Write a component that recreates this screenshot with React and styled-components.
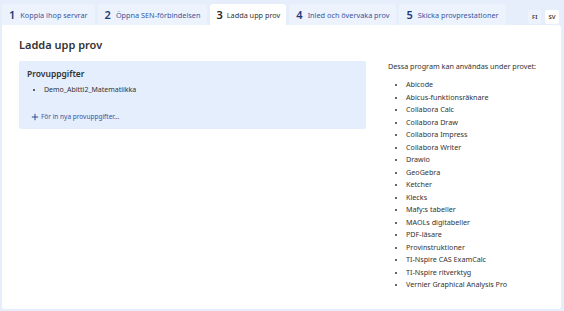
import styled, { createGlobalStyle } from "styled-components";

const GlobalStyle = createGlobalStyle`
  html, body {
    margin: 0;
    padding: 0;
    background: #e6eefb;
    font-family: "Noto Sans", "Open Sans", sans-serif;
    color: #333;
  }
`;

const steps = [
  "Koppla ihop servrar",
  "Öppna SEN-förbindelsen",
  "Ladda upp prov",
  "Inled och övervaka prov",
  "Skicka provprestationer",
];

const programs = [
  "Abicode",
  "Abicus-funktionsräknare",
  "Collabora Calc",
  "Collabora Draw",
  "Collabora Impress",
  "Collabora Writer",
  "Drawio",
  "GeoGebra",
  "Ketcher",
  "Klecks",
  "Mafy:s tabeller",
  "MAOLs digitabeller",
  "PDF-läsare",
  "Provinstruktioner",
  "TI-Nspire CAS ExamCalc",
  "TI-Nspire ritverktyg",
  "Vernier Graphical Analysis Pro",
];

export default function App() {
  const active = 2;
  return (
    <Page>
      <GlobalStyle />
      <TabBar>
        {steps.map((s, i) => (
          <Tab key={s} $active={i === active}>
            <Num $active={i === active}>{i + 1}</Num>
            {s}
          </Tab>
        ))}
        <Lang>
          <LangBtn>FI</LangBtn>
          <LangBtn $active>SV</LangBtn>
        </Lang>
      </TabBar>
      <Panel>
        <Main>
          <Title>Ladda upp prov</Title>
          <Box>
            <BoxTitle>Provuppgifter</BoxTitle>
            <FileList>
              <li>Demo_Abitti2_Matematiikka</li>
            </FileList>
            <AddLink>
              <Plus viewBox="0 0 10 10">
                <path d="M5 1v8M1 5h8" stroke="#1f3a7a" strokeWidth="1.1" />
              </Plus>
              För in nya provuppgifter...
            </AddLink>
          </Box>
        </Main>
        <Side>
          <SideIntro>Dessa program kan användas under provet:</SideIntro>
          <ProgramList>
            {programs.map((p) => (
              <li key={p}>{p}</li>
            ))}
          </ProgramList>
        </Side>
      </Panel>
    </Page>
  );
}

const Page = styled.div`
  height: 311px;
  box-sizing: border-box;
  padding: 4px 3px 2px 2px;
  display: flex;
  flex-direction: column;
`;

const TabBar = styled.div`
  display: flex;
  align-items: flex-end;
  gap: 3px;
  height: 21px;
`;

const Tab = styled.div`
  display: flex;
  align-items: center;
  gap: ${(p) => (p.$active ? "4px" : "5px")};
  height: 21px;
  padding: 0 ${(p) => (p.$active ? "6px" : "7px")};
  box-sizing: border-box;
  border-radius: 3px 3px 0 0;
  background: ${(p) => (p.$active ? "#fff" : "#edf3fd")};
  color: ${(p) => (p.$active ? "#333" : "#3a55a0")};
  font-size: 7.3px;
  white-space: nowrap;
`;

const Num = styled.span`
  font-size: 11px;
  font-weight: 600;
  color: ${(p) => (p.$active ? "#222" : "#1f3a7a")};
`;

const Lang = styled.div`
  margin-left: auto;
  display: flex;
  gap: 4px;
  align-self: center;
  margin-top: 4px;
  margin-right: 2px;
`;

const LangBtn = styled.div`
  font-size: 6px;
  font-weight: 600;
  color: #333;
  padding: 3px 3.5px;
  border-radius: 2px;
  background: ${(p) => (p.$active ? "#fff" : "#edf3fd")};
`;

const Panel = styled.div`
  flex: 1;
  background: #fff;
  border-radius: 0 3px 3px 3px;
  display: flex;
  gap: 22px;
  padding: 12px 17px;
`;

const Main = styled.div`
  width: 347px;
`;

const Title = styled.h1`
  margin: 0 0 9px;
  font-size: 11px;
  font-weight: 600;
  color: #333;
`;

const Box = styled.div`
  background: #e5eefd;
  border-radius: 2px;
  padding: 7px 8px 8px;
`;

const BoxTitle = styled.div`
  font-size: 8.5px;
  font-weight: 600;
  color: #333;
`;

const FileList = styled.ul`
  margin: 6px 0 18px;
  padding-left: 17px;
  font-size: 7px;
  color: #333;
  li::marker {
    font-size: 6px;
  }
`;

const AddLink = styled.div`
  display: flex;
  align-items: center;
  gap: 2px;
  padding-left: 4px;
  font-size: 6.5px;
  color: #3a55a0;
`;

const Plus = styled.svg`
  width: 8px;
  height: 8px;
`;

const Side = styled.div`
  flex: 1;
  padding-top: 24px;
`;

const SideIntro = styled.div`
  font-size: 7.2px;
  color: #333;
`;

const ProgramList = styled.ul`
  margin: 7px 0 0;
  padding-left: 18px;
  font-size: 7.2px;
  line-height: 12.5px;
  color: #333;
  li::marker {
    font-size: 6px;
  }
`;
